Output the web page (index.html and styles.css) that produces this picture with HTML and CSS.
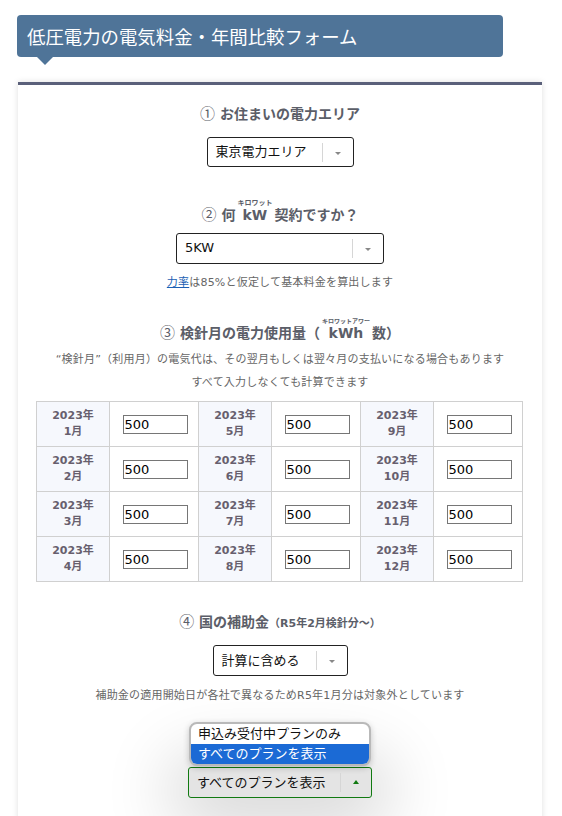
FILE: index.html
```html
<!DOCTYPE html>
<html lang="ja">
<head>
    <meta charset="UTF-8">
    <meta name="viewport" content="width=device-width, initial-scale=1.0">
    <title>低圧電力の電気料金・年間比較フォーム</title>
    <link rel="stylesheet" href="styles.css">
</head>
<body>
    <div class="page">
        <div class="form-head">
            <h1>低圧電力の電気料金・年間比較フォーム</h1>
        </div>

        <div class="form-card">
            <!-- ① area -->
            <h2 class="step-title step-first"><span class="num">①</span> お住まいの電力エリア</h2>
            <div class="pick pick-area">
                <span class="pick-value">東京電力エリア</span>
                <span class="pick-arrow"></span>
            </div>

            <!-- ② contract -->
            <h2 class="step-title step-kw"><span class="num">②</span> 何<ruby>kW<rt>キロワット</rt></ruby>契約ですか？</h2>
            <div class="pick pick-kw">
                <span class="pick-value">5KW</span>
                <span class="pick-arrow"></span>
            </div>
            <p class="step-note note-rate"><a href="#">力率</a>は85%と仮定して基本料金を算出します</p>

            <!-- ③ usage -->
            <h2 class="step-title step-usage"><span class="num">③</span> 検針月の電力使用量（<ruby class="ruby-kwh">kWh<rt>キロワットアワー</rt></ruby>数）</h2>
            <p class="step-note note-usage">“検針月”（利用月）の電気代は、その翌月もしくは翌々月の支払いになる場合もあります<br>すべて入力しなくても計算できます</p>

            <table class="usage-table">
                <tr>
                    <th>2023年<br>1月</th><td><input type="text" value="500"></td>
                    <th>2023年<br>5月</th><td><input type="text" value="500"></td>
                    <th>2023年<br>9月</th><td><input type="text" value="500"></td>
                </tr>
                <tr>
                    <th>2023年<br>2月</th><td><input type="text" value="500"></td>
                    <th>2023年<br>6月</th><td><input type="text" value="500"></td>
                    <th>2023年<br>10月</th><td><input type="text" value="500"></td>
                </tr>
                <tr>
                    <th>2023年<br>3月</th><td><input type="text" value="500"></td>
                    <th>2023年<br>7月</th><td><input type="text" value="500"></td>
                    <th>2023年<br>11月</th><td><input type="text" value="500"></td>
                </tr>
                <tr>
                    <th>2023年<br>4月</th><td><input type="text" value="500"></td>
                    <th>2023年<br>8月</th><td><input type="text" value="500"></td>
                    <th>2023年<br>12月</th><td><input type="text" value="500"></td>
                </tr>
            </table>

            <!-- ④ subsidy -->
            <h2 class="step-title step-subsidy"><span class="num">④</span> 国の補助金<small>（R5年2月検針分～）</small></h2>
            <div class="pick pick-subsidy">
                <span class="pick-value">計算に含める</span>
                <span class="pick-arrow"></span>
            </div>
            <p class="step-note note-subsidy">補助金の適用開始日が各社で異なるためR5年1月分は対象外としています</p>

            <!-- plan filter (open) -->
            <div class="pick pick-plan is-open">
                <ul class="pick-menu">
                    <li>申込み受付中プランのみ</li>
                    <li class="selected">すべてのプランを表示</li>
                </ul>
                <span class="pick-value">すべてのプランを表示</span>
                <span class="pick-arrow"></span>
            </div>
        </div>
    </div>
</body>
</html>
```

FILE: styles.css
```css
* {
    margin: 0;
    padding: 0;
    box-sizing: border-box;
}

body {
    background: #fff;
    font-family: "DejaVu Sans", "Noto Sans CJK JP", sans-serif;
    color: #333;
}

.page {
    padding: 15px 20px 0 17px;
}

.form-head {
    position: relative;
    width: 486px;
    height: 42px;
    background: #4f7498;
    border-radius: 4px;
    padding-left: 10px;
}

.form-head::after {
    content: "";
    position: absolute;
    left: 20px;
    top: 100%;
    border-left: 8px solid transparent;
    border-right: 8px solid transparent;
    border-top: 8px solid #4f7498;
}

.form-head h1 {
    font-family: "Noto Sans CJK JP", sans-serif;
    font-size: 18.4px;
    font-weight: 400;
    line-height: 42px;
    color: #fff;
}

.form-card {
    width: 524px;
    height: 740px;
    margin: 25px 0 0 1px;
    background: #fff;
    border-top: 3px solid #5a607a;
    box-shadow: 0 0 6px rgba(0,0,0,0.13);
    padding-top: 19px;
}

.step-title {
    height: 20px;
    text-align: center;
    font-size: 14px;
    line-height: 20px;
    font-weight: 700;
    color: #5b5e68;
}

.step-title .num {
    font-family: "Noto Sans CJK JP", sans-serif;
    font-size: 15px;
    font-weight: 400;
    line-height: 1;
}

.step-title ruby {
    margin: 0 5px;
}

.step-title rt {
    font-family: "Noto Sans CJK JP", sans-serif;
    font-size: 7px;
    font-weight: 700;
    line-height: 1;
    padding-bottom: 2px;
}

.ruby-kwh rt {
    font-size: 6px;
}

.step-title small {
    font-size: 11px;
    line-height: 1;
}

.step-kw { margin-top: 30px; }
.step-usage { margin-top: 24px; }
.step-subsidy { margin-top: 30px; }

.step-note {
    text-align: center;
    font-size: 11px;
    letter-spacing: 0.2px;
    color: #666;
}

.step-note a {
    color: #1a5fb4;
}

.note-rate { margin-top: 10px; line-height: 18px; }
.note-usage { margin-top: 12px; line-height: 23px; }
.note-subsidy { margin-top: 11px; line-height: 18px; }

/* select boxes */
.pick {
    position: relative;
    display: flex;
    align-items: center;
    height: 31px;
    margin: 13px auto 0;
    background: #fff;
    border: 1px solid #222;
    border-radius: 3px;
    font-size: 13px;
    color: #111;
}

.pick-value {
    flex: 1;
    padding: 0 0 3px 8px;
    white-space: nowrap;
}

.pick-arrow {
    position: relative;
    width: 31px;
    height: 19px;
    border-left: 1px solid #d6d6d6;
}

.pick-arrow::after {
    content: "";
    position: absolute;
    left: 12px;
    top: 9px;
    border-left: 3px solid transparent;
    border-right: 3px solid transparent;
    border-top: 3px solid #888;
}

.pick-area { width: 147px; margin-top: 13px; height: 30px; }
.pick-kw { width: 208px; margin-top: 16px; }
.pick-subsidy { width: 135px; margin-top: 13px; }

.pick-plan {
    width: 184px;
    margin-top: 62px;
    background: #e4e4e4;
    border-color: #117a11;
    box-shadow: 0 8px 70px 14px rgba(0,0,0,0.2);
}

.pick-plan .pick-arrow::after {
    border-top: 0;
    border-bottom: 4px solid #117a11;
    top: 7px;
}

.pick-menu {
    position: absolute;
    left: 0;
    right: 0;
    bottom: calc(100% + 2px);
    list-style: none;
    background: #fff;
    border: 2px solid #b9b9b9;
    border-radius: 8px;
    overflow: hidden;
    box-shadow: 0 2px 6px rgba(0,0,0,0.2);
}

.pick-menu li {
    height: 20px;
    line-height: 19px;
    padding-left: 7px;
    font-size: 13px;
    color: #111;
}

.pick-menu li.selected {
    background: #1b6ad5;
    color: #fff;
}

/* usage table */
.usage-table {
    width: 486px;
    margin: 7px 0 0 18px;
    border-collapse: collapse;
    table-layout: fixed;
}

.usage-table th,
.usage-table td {
    height: 45px;
    border: 1px solid #d0d0d0;
    text-align: center;
}

.usage-table th {
    width: 73px;
    background: #f6f8fd;
    font-size: 11px;
    line-height: 16px;
    color: #675f6e;
}

.usage-table td {
    width: 89px;
}

.usage-table input {
    width: 65px;
    height: 19px;
    border: 1px solid #767676;
    padding: 0 1px;
    font-family: "DejaVu Sans", sans-serif;
    font-size: 13px;
    color: #000;
    margin-left: 2px;
}
```
